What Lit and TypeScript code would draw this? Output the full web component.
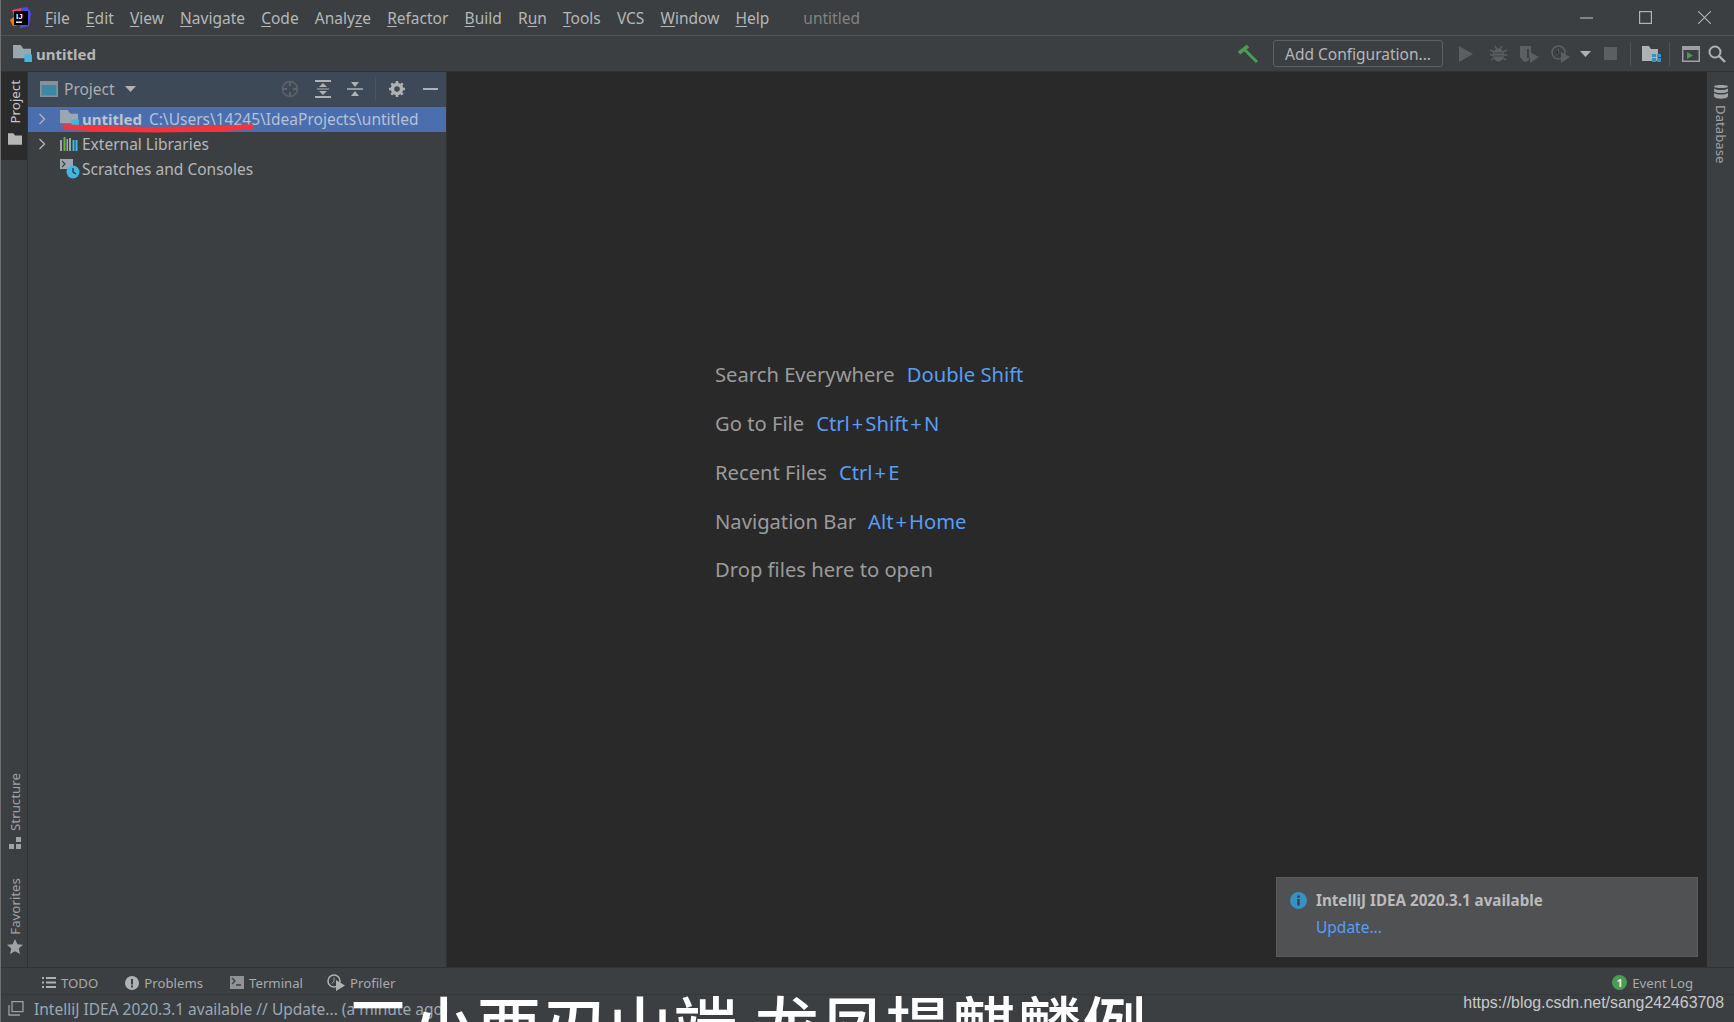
import { LitElement, html, css } from "lit"
import { customElement } from "lit/decorators.js"

// [before, underlined letter, after]
const MENU: [string, string, string][] = [
  ["", "F", "ile"], ["", "E", "dit"], ["", "V", "iew"], ["", "N", "avigate"],
  ["", "C", "ode"], ["Analy", "z", "e"], ["", "R", "efactor"], ["", "B", "uild"],
  ["R", "u", "n"], ["", "T", "ools"], ["VCS", "", ""], ["", "W", "indow"], ["", "H", "elp"],
]

const HINTS = [
  ["Search Everywhere", "Double Shift"],
  ["Go to File", "Ctrl+Shift+N"],
  ["Recent Files", "Ctrl+E"],
  ["Navigation Bar", "Alt+Home"],
  ["Drop files here to open", ""],
]

const folder = (w: number, h: number, fill = "#9aa7b0") => html`<svg width=${w} height=${h} viewBox="0 0 18 15"><path fill=${fill} d="M0 0h7l2 3h9v12H0z"/></svg>`
const moduleFolder = (w: number, h: number) => html`<svg width=${w} height=${h} viewBox="0 0 20 18"><path fill="#9aa7b0" d="M0 0h8l3 4h8v10H0z"/><rect x="12" y="10" width="8" height="8" fill="#40b6e0"/></svg>`

@customElement("app-root")
export class AppRoot extends LitElement {
  static styles = css`
    :host { display: block; }
    .app {
      position: relative; width: 1734px; height: 1022px; overflow: hidden;
      display: flex; flex-direction: column; background: #3c3f41;
      font-family: "Noto Sans", "Open Sans", sans-serif; color: #b4b6b8;
      border-left: 1px solid #6f7072; box-sizing: border-box;
    }
    svg { display: block; flex: none; }
    .title { height: 36px; box-sizing: border-box; flex: none; display: flex; align-items: center; border-bottom: 1px solid #515355; padding-left: 9px; }
    .menu { display: flex; gap: 16.2px; margin-left: 13px; font-size: 15.5px; color: #b4b7b9; }
    .menu u { text-underline-offset: 2px; }
    .doc { margin-left: 34px; font-size: 15.5px; color: #808284; }
    .win { margin-left: auto; display: flex; align-items: center; gap: 45.7px; padding-right: 23.5px; }
    .nav { height: 36px; box-sizing: border-box; flex: none; display: flex; align-items: center; padding-left: 12px; border-bottom: 1px solid #323232; }
    .crumb { font-size: 15px; font-weight: 700; color: #b4b6b8; margin-left: 4px; }
    .tools { margin-left: auto; display: flex; align-items: center; padding-right: 8px; }
    .cfg {
      width: 170px; height: 27px; box-sizing: border-box; border: 1px solid #5e6163; border-radius: 3px;
      display: flex; align-items: center; justify-content: center; font-size: 15.5px; color: #b4b6b8;
      margin-left: 15px;
    }
    .vsep { width: 1px; height: 24px; background: #515355; }
    .play { margin-left: 16px; }
    .bug { margin-left: 16.5px; }
    .cov { margin-left: 12.5px; }
    .prof { margin-left: 11.5px; }
    .caret { margin-left: 10px; }
    .stop, .sep1 { margin-left: 13px; }
    .fold { margin-left: 11px; }
    .sep2 { margin-left: 8.5px; }
    .term { margin-left: 12px; }
    .find { margin-left: 8px; }
    .main { flex: 1; display: flex; min-height: 0; }
    .strip-l { width: 26px; flex: none; display: flex; flex-direction: column; border-right: 1px solid #323232; }
    .tab-on { height: 88px; background: #2b2b2b; display: flex; flex-direction: column; align-items: center; padding: 8px 0 0 2px; box-sizing: border-box; gap: 10px; color: #c8c8c8; }
    .vtext { writing-mode: vertical-rl; transform: rotate(180deg); font-size: 13.3px; line-height: 16px; }
    .tab { display: flex; flex-direction: column; align-items: center; gap: 6px; padding-left: 2px; color: #a0a2a4; }
    .tab.fav { gap: 4px; }
    .tabs-end { margin-top: auto; display: flex; flex-direction: column; gap: 29px; padding-bottom: 13px; }
    .panel { width: 418px; flex: none; display: flex; flex-direction: column; }
    .phead { height: 35px; flex: none; display: flex; align-items: center; background: #3d4956; padding: 0 0 2px 12px; box-sizing: border-box; }
    .phead .name { font-size: 15.5px; color: #a9adb1; margin: 0 10px 0 6px; }
    .pbtns { margin-left: auto; display: flex; align-items: center; padding-right: 8.5px; gap: 16px; }
    .pbtns .vsep { margin: 0 -3px 0 -4px; }
    .pbtns .hide { margin-left: 1.5px; }
    .row { height: 25.3px; padding-bottom: 2px; box-sizing: border-box; display: flex; align-items: center; font-size: 15.5px; color: #b4b6b8; position: relative; }
    .row.sel { background: #4b6eaf; }
    .chev { width: 32px; flex: none; padding-left: 10px; box-sizing: border-box; }
    .ico { width: 22px; flex: none; }
    .row b { font-weight: 700; font-size: 15px; color: #c0c4cc; margin-right: 7px; }
    .path { color: #b7c1d4; }
    .editor { flex: 1; background: #292929; padding: 278px 0 0 268px; box-sizing: border-box; border-left: 1px solid #323232; }
    .hint { height: 48.75px; display: flex; align-items: center; gap: 12px; font-size: 20.2px; color: #9b9b9b; }
    .hint span { color: #589df6; }
    .hint i { font-style: normal; margin: 0 2px; }
    .strip-r { width: 27px; flex: none; display: flex; flex-direction: column; align-items: center; padding-top: 12px; box-sizing: border-box; gap: 6px; color: #a0a2a4; }
    .vtext-r { writing-mode: vertical-rl; font-size: 13.2px; line-height: 16px; }
    .bar { height: 28px; flex: none; display: flex; align-items: center; border-top: 1px solid #323232; border-bottom: 1px solid #35383a; padding: 3px 0 0 41px; font-size: 13.2px; color: #a8aaac; box-sizing: border-box; }
    .bar .it { display: flex; align-items: center; gap: 5px; margin-right: 27px; }
    .bar .it.short { margin-right: 24px; }
    .bar .log { margin-left: auto; margin-right: 41px; display: flex; align-items: center; gap: 5px; }
    .badge { width: 15px; height: 15px; border-radius: 50%; background: #499c54; color: #e8e8e8; font-size: 11px; font-weight: 700; display: flex; align-items: center; justify-content: center; }
    .status { height: 27px; flex: none; display: flex; align-items: center; padding-left: 7px; gap: 10px; font-size: 15.5px; color: #9ba8b2; }
    .notify {
      position: absolute; left: 1275px; top: 877px; width: 422px; height: 80px; box-sizing: border-box;
      background: #4f5153; border: 1px solid #5a5d5f; padding: 12px 13px; display: grid; align-content: start;
      grid-template-columns: 17px 1fr; column-gap: 9px; row-gap: 6px; align-items: center; font-size: 15.5px; line-height: 21px;
    }
    .notify b { color: #bbbbbb; font-weight: 700; font-size: 15.2px; }
    .notify a { grid-column: 2; color: #589df6; }
    .underline { position: absolute; left: 60px; top: 122px; }
    .subtitle {
      position: absolute; left: 345px; top: 984px; white-space: nowrap; font-size: 64px; line-height: 76px;
      letter-spacing: 1.5px; color: #fff; font-weight: 500;
      font-family: "Noto Sans CJK SC", "Noto Sans", sans-serif;
    }
    .mark { position: absolute; right: 10px; top: 994px; font-family: "Liberation Sans", Arial, sans-serif; font-size: 15.9px; color: #c9c9c9; }
  `

  private logo() {
    return html`<svg width="22" height="22" viewBox="0 0 22 22">
      <path fill="#fc3a6b" d="M2 3l9-2 3 6-9 6z"/><path fill="#f97a12" d="M0 13l5-4 3 9-5 1z"/>
      <path fill="#4a4ee0" d="M11 1l6-1 4 6-2 13-9 2z"/>
      <rect x="4" y="4" width="14" height="14" fill="#000"/>
      <text x="6" y="12" font-size="8" font-weight="700" fill="#fff" font-family="Liberation Sans">IJ</text>
      <rect x="6" y="14.5" width="6" height="1.4" fill="#fff"/></svg>`
  }

  private toolIcons() {
    const dim = "#5c5f61"
    return html`
      <svg width="20" height="20" viewBox="0 0 20 20"><path fill="none" stroke="#499c54" stroke-width="3" d="M7 6l12 12"/><path fill="none" stroke="#499c54" stroke-width="3.6" d="M1 9l9-7"/></svg>
      <div class="cfg">Add Configuration...</div>
      <svg class="play" width="14" height="16" viewBox="0 0 14 16"><path fill=${dim} d="M0 0l14 8-14 8z"/></svg>
      <svg class="bug" width="17" height="17" viewBox="0 0 17 17"><ellipse cx="8.5" cy="10" rx="5.5" ry="6.5" fill=${dim}/><path stroke=${dim} stroke-width="1.5" d="M0 5l4 2M17 5l-4 2M0 10h3M17 10h-3M1 15l3-2M16 15l-3-2M5 1l2 3M12 1l-2 3"/><path stroke="#3c3f41" d="M4 8h9M4 11h9"/></svg>
      <svg class="cov" width="20" height="18" viewBox="0 0 20 18"><path fill=${dim} d="M1 1h11v9l-3 6-4 1-4-5z"/><path fill="#3c3f41" d="M8 4h2v9H8z"/><path fill=${dim} d="M11 7l9 5-9 6z"/></svg>
      <svg class="prof" width="19" height="18" viewBox="0 0 19 18"><circle cx="7.5" cy="7.5" r="6.5" fill="none" stroke=${dim} stroke-width="1.6"/><path stroke=${dim} d="M7.5 3.5v4l-2 3"/><path fill=${dim} d="M10 7l9 5-9 6z"/></svg>
      <svg class="caret" width="11" height="6" viewBox="0 0 11 6"><path fill="#afb1b3" d="M0 0h11L5.500 6z"/></svg>
      <svg class="stop" width="13" height="13" viewBox="0 0 13 13"><rect width="13" height="13" fill=${dim}/></svg>
      <div class="vsep sep1"></div>
      <svg class="fold" width="19" height="16" viewBox="0 0 19 16"><path fill="#afb1b3" d="M0 0h7l2 3h7v12H0z"/><path fill="#3592c4" d="M10 8h4v3h-4zM15 8h4v3h-4zM10 12h4v4h-4zM15 12h4v4h-4z"/></svg>
      <div class="vsep sep2"></div>
      <svg class="term" width="18" height="16" viewBox="0 0 18 16"><rect x=".75" y=".75" width="16.500" height="14.500" fill="none" stroke="#9aa0a4" stroke-width="1.500"/><rect x="1" y="1" width="16" height="3" fill="#9aa0a4"/><path fill="#499c54" d="M5 6l6 3.500-6 3.500z"/></svg>
      <svg class="find" width="18" height="18" viewBox="0 0 18 18"><circle cx="7" cy="7" r="5.500" fill="none" stroke="#afb1b3" stroke-width="2"/><path stroke="#afb1b3" stroke-width="2.400" d="M11 11l6 6"/></svg>`
  }

  private panelButtons() {
    const c = "#afb1b3"
    return html`
      <svg width="18" height="18" viewBox="0 0 18 18"><circle cx="9" cy="9" r="7.500" fill="none" stroke="#5f6365" stroke-width="1.500"/><path stroke="#5f6365" stroke-width="2" d="M9 1v5M9 12v5M1 9h5M12 9h5"/></svg>
      <svg width="16" height="18" viewBox="0 0 16 18"><path stroke=${c} stroke-width="2" d="M0 1h16M0 17h16"/><path fill=${c} d="M8 3l4 4H4zM8 15l4-4H4z"/><path stroke=${c} d="M2 9h12"/></svg>
      <svg width="16" height="18" viewBox="0 0 16 18"><path stroke=${c} stroke-width="1.500" d="M0 9h16"/><path fill=${c} d="M8 7L4 2h8zM8 11l4 5H4z"/></svg>
      <div class="vsep"></div>
      <svg width="16" height="16" viewBox="0 0 16 16"><circle cx="8" cy="8" r="4.500" fill="none" stroke=${c} stroke-width="3.500"/><path stroke=${c} stroke-width="2.600" d="M8 0v3M8 13v3M0 8h3M13 8h3M2.300 2.300l2 2M11.700 11.700l2 2M13.700 2.300l-2 2M4.300 11.700l-2 2"/></svg>
      <svg class="hide" width="15" height="2" viewBox="0 0 15 2"><rect width="15" height="2" fill=${c}/></svg>`
  }

  // the reference font has a wider plus sign than ours
  private shortcut(keys: string) {
    return html`<span>${keys.split("+").map((k, i) => html`${i ? html`<i>+</i>` : ""}${k}`)}</span>`
  }

  render() {
    const chevron = html`<svg width="9" height="12" viewBox="0 0 9 12"><path fill="none" stroke="#b0b2b4" stroke-width="1.400" d="M1.500 1l5 5-5 5"/></svg>`
    return html`<div class="app">
      <div class="title">
        ${this.logo()}
        <div class="menu">${MENU.map(([a, b, c]) => html`<div>${a}${b ? html`<u>${b}</u>` : ""}${c}</div>`)}</div>
        <div class="doc">untitled</div>
        <div class="win">
          <svg width="13" height="13" viewBox="0 0 13 13"><path stroke="#b0b2b4" stroke-width="1.200" d="M0 7h13"/></svg>
          <svg width="13" height="13" viewBox="0 0 13 13"><rect x=".6" y=".6" width="11.800" height="11.800" fill="none" stroke="#b0b2b4" stroke-width="1.200"/></svg>
          <svg width="13" height="13" viewBox="0 0 13 13"><path stroke="#b0b2b4" stroke-width="1.100" d="M0 0l13 13M13 0L0 13"/></svg>
        </div>
      </div>

      <div class="nav">
        ${moduleFolder(19, 17)}
        <div class="crumb">untitled</div>
        <div class="tools">${this.toolIcons()}</div>
      </div>

      <div class="main">
        <div class="strip-l">
          <div class="tab-on"><div class="vtext">Project</div>${folder(14, 12, "#b4b6b8")}</div>
          <div class="tabs-end">
            <div class="tab"><div class="vtext">Structure</div>
              <svg width="12" height="12" viewBox="0 0 12 12"><path fill="#a0a2a4" d="M7 0h5v5H7zM0 7h5v5H0zM7 7h5v5H7z"/></svg></div>
            <div class="tab fav"><div class="vtext">Favorites</div>
              <svg width="16" height="15" viewBox="0 0 16 15"><path fill="#a0a2a4" d="M8 0l2.400 5.200 5.600.6-4.200 3.700 1.200 5.500L8 12.200 3 15l1.200-5.500L0 5.800l5.600-.6z"/></svg></div>
          </div>
        </div>

        <div class="panel">
          <div class="phead">
            <svg width="18" height="16" viewBox="0 0 18 16"><rect x=".75" y=".75" width="16.500" height="14.500" fill="#3d87a8" stroke="#8a9299" stroke-width="1.500"/><rect x="1" y="1" width="16" height="3" fill="#8a9299"/></svg>
            <div class="name">Project</div>
            <svg width="11" height="6" viewBox="0 0 11 6"><path fill="#afb1b3" d="M0 0h11L5.500 6z"/></svg>
            <div class="pbtns">${this.panelButtons()}</div>
          </div>
          <div class="row sel">
            <div class="chev">${chevron}</div>
            <div class="ico">${moduleFolder(19, 17)}</div>
            <b>untitled</b><span class="path">C:\\Users\\14245\\IdeaProjects\\untitled</span>
          </div>
          <div class="row">
            <div class="chev">${chevron}</div>
            <div class="ico"><svg width="18" height="15" viewBox="0 0 18 15"><path fill="#9aa7b0" d="M0 4h2v11H0zM9 2h2v13H9z"/><path fill="#62b543" d="M3.500 1h2v14h-2z"/><path fill="#9aa7b0" d="M6.500 3h1.500v12H6.500z"/><path fill="#40b6e0" d="M12.500 4h2v11h-2zM15.500 4h2v11h-2z"/></svg></div>
            External Libraries
          </div>
          <div class="row">
            <div class="chev"></div>
            <div class="ico"><svg width="20" height="20" viewBox="0 0 20 20"><path fill="#9aa7b0" d="M0 0h13v10H0z"/><path fill="none" stroke="#3c3f41" stroke-width="1.200" d="M2 2l3 3-3 3"/><circle cx="13" cy="13" r="6.500" fill="#40b6e0"/><path fill="none" stroke="#2b2b2b" stroke-width="1.200" d="M13 9v4l3 2"/></svg></div>
            Scratches and Consoles
          </div>
        </div>

        <div class="editor">
          ${HINTS.map(([a, b]) => html`<div class="hint">${a}${b ? this.shortcut(b) : ""}</div>`)}
        </div>

        <div class="strip-r">
          <svg width="14" height="15" viewBox="0 0 14 15"><path fill="#a0a2a4" d="M0 2.500C0 .5 14 .5 14 2.500S0 4.500 0 2.500zM0 4.500c3 2 11 2 14 0v3c-3 2-11 2-14 0zM0 9c3 2 11 2 14 0v3.500c-2 3-12 3-14 0z"/></svg>
          <div class="vtext-r">Database</div>
        </div>
      </div>

      <div class="bar">
        <div class="it"><svg width="14" height="11" viewBox="0 0 14 11"><path fill="#afb1b3" d="M0 0h2v2H0zM4 0h10v2H4zM0 4.500h2v2H0zM4 4.500h10v2H4zM0 9h2v2H0zM4 9h10v2H4z"/></svg>TODO</div>
        <div class="it"><svg width="14" height="14" viewBox="0 0 14 14"><circle cx="7" cy="7" r="7" fill="#afb1b3"/><rect x="6" y="3" width="2" height="5.500" fill="#3c3f41"/><rect x="6" y="9.500" width="2" height="2" fill="#3c3f41"/></svg>Problems</div>
        <div class="it short"><svg width="14" height="13" viewBox="0 0 14 13"><rect width="14" height="13" fill="#8f9395"/><path fill="none" stroke="#3c3f41" stroke-width="1.300" d="M2 2l3 3-3 3M6 9h5"/></svg>Terminal</div>
        <div class="it"><svg width="18" height="17" viewBox="0 0 18 17"><circle cx="7" cy="7" r="6" fill="none" stroke="#afb1b3" stroke-width="1.500"/><path stroke="#afb1b3" d="M7 3.500v3.500l-2 2.500"/><path fill="#afb1b3" d="M9 6l9 5.500L9 17z"/></svg>Profiler</div>
        <div class="log"><div class="badge">1</div>Event Log</div>
      </div>

      <div class="status">
        <svg width="16" height="15" viewBox="0 0 16 15"><path fill="none" stroke="#9aa0a4" stroke-width="1.300" d="M4 .7h11v10H4zM1 4v10h11"/></svg>
        IntelliJ IDEA 2020.3.1 available // Update... (a minute ago)
      </div>

      <div class="notify">
        <svg width="17" height="17" viewBox="0 0 17 17"><circle cx="8.500" cy="8.500" r="8.500" fill="#3592c4"/><rect x="7.300" y="3.500" width="2.400" height="2.400" fill="#3c3f41"/><rect x="7.300" y="7" width="2.400" height="6.500" fill="#3c3f41"/></svg>
        <b>IntelliJ IDEA 2020.3.1 available</b>
        <a>Update...</a>
      </div>

      <svg class="underline" width="196" height="12" viewBox="0 0 196 12"><path fill="none" stroke="#f4343a" stroke-width="5.500" stroke-linecap="round" d="M4 5C60 8.500 130 8.500 190 5"/></svg>
      <div class="subtitle">三小西刃山端 龙凤提麒麟例</div>
      <div class="mark">https://blog.csdn.net/sang242463708</div>
    </div>`
  }
}
